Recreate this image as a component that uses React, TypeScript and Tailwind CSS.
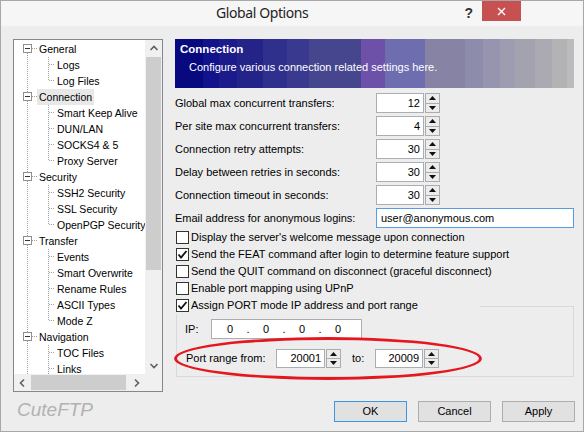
import React from "react";

type TreeNode = { label: string; kind: "parent" | "child" | "last"; first?: boolean; selected?: boolean };

const tree: TreeNode[] = [
  { label: "General", kind: "parent", first: true },
  { label: "Logs", kind: "child" },
  { label: "Log Files", kind: "last" },
  { label: "Connection", kind: "parent", selected: true },
  { label: "Smart Keep Alive", kind: "child" },
  { label: "DUN/LAN", kind: "child" },
  { label: "SOCKS4 & 5", kind: "child" },
  { label: "Proxy Server", kind: "last" },
  { label: "Security", kind: "parent" },
  { label: "SSH2 Security", kind: "child" },
  { label: "SSL Security", kind: "child" },
  { label: "OpenPGP Security", kind: "last" },
  { label: "Transfer", kind: "parent" },
  { label: "Events", kind: "child" },
  { label: "Smart Overwrite", kind: "child" },
  { label: "Rename Rules", kind: "child" },
  { label: "ASCII Types", kind: "child" },
  { label: "Mode Z", kind: "last" },
  { label: "Navigation", kind: "parent" },
  { label: "TOC Files", kind: "child" },
  { label: "Links", kind: "child" },
];

const spinRows: [string, string][] = [
  ["Global max concurrent transfers:", "12"],
  ["Per site max concurrent transfers:", "4"],
  ["Connection retry attempts:", "30"],
  ["Delay between retries in seconds:", "30"],
  ["Connection timeout in seconds:", "30"],
];

const checks: [string, boolean][] = [
  ["Display the server's welcome message upon connection", false],
  ["Send the FEAT command after login to determine feature support", true],
  ["Send the QUIT command on disconnect (graceful disconnect)", false],
  ["Enable port mapping using UPnP", false],
];

const DOT = "#a0a0a0";

function TreeLines({ node }: { node: TreeNode }) {
  if (node.kind === "parent") {
    return (
      <svg width="23" height="16" className="shrink-0">
        {!node.first && <line x1="13.5" y1="0" x2="13.5" y2="3" stroke={DOT} strokeDasharray="1 1" />}
        <line x1="13.5" y1="12" x2="13.5" y2="16" stroke={DOT} strokeDasharray="1 1" />
        <rect x="9.5" y="3.5" width="8" height="8" fill="#fff" stroke="#8f8f8f" />
        <line x1="11" y1="7.5" x2="16" y2="7.5" stroke="#333" />
        <line x1="18" y1="7.5" x2="23" y2="7.5" stroke={DOT} strokeDasharray="1 1" />
      </svg>
    );
  }
  return (
    <svg width="41" height="16" className="shrink-0">
      <line x1="13.5" y1="0" x2="13.5" y2="16" stroke={DOT} strokeDasharray="1 1" />
      <line x1="34.5" y1="0" x2="34.5" y2={node.kind === "last" ? 8 : 16} stroke={DOT} strokeDasharray="1 1" />
      <line x1="35" y1="7.5" x2="42" y2="7.5" stroke={DOT} strokeDasharray="1 1" />
    </svg>
  );
}

function Chevron({ dir }: { dir: "up" | "down" | "left" | "right" }) {
  const pts = {
    up: "1.5,6 5,2.5 8.5,6",
    down: "1.5,3 5,6.5 8.5,3",
    left: "6,1.5 2.5,5 6,8.5",
    right: "3,1.5 6.5,5 3,8.5",
  }[dir];
  return (
    <svg width="10" height="10">
      <polyline points={pts} fill="none" stroke="#606060" strokeWidth="1.6" />
    </svg>
  );
}

function Spin() {
  return (
    <div className="ml-[1px] w-[15px] h-full border border-[#acacac] bg-[#ececec] flex flex-col">
      <div className="flex-1 flex items-center justify-center border-b border-[#acacac]">
        <svg width="7" height="4">
          <polygon points="0,4 3.5,0 7,4" fill="#111" />
        </svg>
      </div>
      <div className="flex-1 flex items-center justify-center">
        <svg width="7" height="4">
          <polygon points="0,0 3.5,4 7,0" fill="#111" />
        </svg>
      </div>
    </div>
  );
}

function NumberBox({ value, width }: { value: string; width: string }) {
  return (
    <div className={`${width} h-full bg-white border border-[#abadb3] flex items-center justify-end pr-[3px]`}>
      {value}
    </div>
  );
}

function CheckBox({ checked }: { checked: boolean }) {
  return (
    <div className="w-[13px] h-[13px] border border-[#333] bg-white flex items-center justify-center shrink-0">
      {checked && (
        <svg width="11" height="11">
          <polyline points="1.5,5.5 4,8.5 9.5,2" fill="none" stroke="#111" strokeWidth="1.8" />
        </svg>
      )}
    </div>
  );
}

function Button({ label, primary }: { label: string; primary?: boolean }) {
  return (
    <div
      className={`w-[73px] h-[21px] bg-[#e1e1e1] border flex items-center justify-center ${
        primary ? "border-[#3c96e0]" : "border-[#adadad]"
      }`}
    >
      {label}
    </div>
  );
}

export default function App() {
  return (
    <div className="w-[584px] h-[432px] bg-[#ededed] border border-[#a8a8a8] flex flex-col text-[11px] leading-none text-black font-['Liberation_Sans',Arial,sans-serif] overflow-hidden">
      {/* title bar */}
      <div className="h-[25px] bg-[#f6f6f6] flex items-start shrink-0">
        <div className="pl-[215px] pt-[5px] text-[14px] tracking-[-0.4px] text-[#1e1e1e] font-['Noto_Sans',sans-serif] leading-none">
          Global Options
        </div>
        <div className="ml-auto pt-[5px] text-[14px] font-bold text-[#333] leading-none">?</div>
        <div className="ml-[9px] mr-[62px] w-[39px] h-[20px] bg-[#c75050] flex items-center justify-center">
          <svg width="9" height="9">
            <path d="M1 1 L8 8 M8 1 L1 8" stroke="#fff" strokeWidth="1.4" />
          </svg>
        </div>
      </div>

      {/* main area */}
      <div className="flex pt-[13px]">
        {/* options tree */}
        <div className="ml-[12px] w-[150px] h-[353px] border border-[#828790] bg-white flex flex-col shrink-0">
          <div className="flex h-[334px]">
            <div className="w-[131px] overflow-hidden pt-[1px] text-[10.5px]">
              {tree.map((n) => (
                <div key={n.label} className="h-[16px] flex items-center whitespace-nowrap">
                  <TreeLines node={n} />
                  <span className={`h-[16px] flex items-center px-[2px] ${n.selected ? "bg-[#e8e8e8]" : ""}`}>
                    {n.label}
                  </span>
                </div>
              ))}
            </div>
            <div className="w-[17px] bg-[#f0f0f0] flex flex-col">
              <div className="h-[17px] flex items-center justify-center">
                <Chevron dir="up" />
              </div>
              <div className="h-[213px] bg-[#cdcdcd] mx-[1px]" />
              <div className="flex-1" />
              <div className="h-[17px] flex items-center justify-center">
                <Chevron dir="down" />
              </div>
            </div>
          </div>
          <div className="flex h-[17px] bg-[#f0f0f0]">
            <div className="w-[17px] flex items-center justify-center">
              <Chevron dir="left" />
            </div>
            <div className="w-[95px] bg-[#cdcdcd] my-[1px]" />
            <div className="flex-1" />
            <div className="w-[17px] flex items-center justify-center">
              <Chevron dir="right" />
            </div>
            <div className="w-[17px]" />
          </div>
        </div>

        {/* connection page */}
        <div className="ml-[12px] w-[399px] flex flex-col">
          <div className="h-[49px] text-white bg-[linear-gradient(to_right,#08087f_0_28px,#12128a_28px_44px,#1b1b8c_44px_62px,#242488_62px_88px,#2f2f8d_88px_112px,#393990_112px_134px,#46468f_134px_186px,#6d50a8_186px_210px,#6d6db0_210px_250px,#8683a5_250px_290px,#8e8cab_290px_308px,#9694ae_308px_325px,#9d9cb1_325px_340px,#a3a2af_340px_360px,#abaab2_360px_377px,#b3b3b6_377px_392px,#bbbbbb_392px_399px)]">
            <div className="pl-[5px] pt-[5px] text-[11.5px] font-bold">Connection</div>
            <div className="pl-[14px] pt-[6px]">Configure various connection related settings here.</div>
          </div>

          <div className="mt-[5px] flex flex-col gap-[3px]">
            {spinRows.map(([label, value]) => (
              <div key={label} className="h-[20px] flex items-center">
                <div className="w-[201px]">{label}</div>
                <NumberBox value={value} width="w-[48px]" />
                <Spin />
              </div>
            ))}
            <div className="h-[20px] flex items-center">
              <div className="w-[201px]">Email address for anonymous logins:</div>
              <div className="w-[198px] h-full bg-white border border-[#569de5] flex items-center pl-[4px]">
                user@anonymous.com
              </div>
            </div>
          </div>

          <div className="mt-[1px] flex flex-col">
            {checks.map(([label, on]) => (
              <div key={label} className="h-[17px] flex items-center gap-[2px] pl-[1px]">
                <CheckBox checked={on} />
                <span>{label}</span>
              </div>
            ))}
          </div>

          {/* port mode group */}
          <div className="relative">
            <div className="mt-[9px] ml-[1px] w-[398px] h-[71px] border border-[#d9d9d9] flex flex-col pt-[12px] pl-[8px]">
              <div className="h-[20px] flex items-center">
                <div className="w-[26px]">IP:</div>
                <div className="w-[151px] h-full bg-white border border-[#abadb3] flex items-center pl-[9px]">
                  {["0", ".", "0", ".", "0", ".", "0"].map((c, i) => (
                    <span key={i} className="w-[18px] text-center">
                      {c}
                    </span>
                  ))}
                </div>
              </div>
              <div className="mt-[10px] h-[19px] flex items-center">
                <div className="w-[91px] pl-[1px]">Port range from:</div>
                <NumberBox value="20001" width="w-[49px]" />
                <Spin />
                <div className="ml-[11px] w-[23px]">to:</div>
                <NumberBox value="20009" width="w-[48px]" />
                <Spin />
              </div>
            </div>
            <div className="absolute left-0 top-0 w-[305px] h-[17px] bg-[#ededed] flex items-center gap-[2px] pl-[1px]">
              <CheckBox checked />
              <span>Assign PORT mode IP address and port range</span>
            </div>
            <div className="absolute left-[-1px] top-[40px] w-[308px] h-[43px] rounded-[50%] border-[3px] border-[#e5161e]" />
          </div>
        </div>
      </div>

      {/* footer */}
      <div className="flex items-start pt-[9px]">
        <div className="ml-[16px] mt-[-1px] text-[19px] italic text-[#b2b2b2]">CuteFTP</div>
        <div className="ml-auto mr-[8px] flex gap-[11px]">
          <Button label="OK" primary />
          <Button label="Cancel" />
          <Button label="Apply" />
        </div>
      </div>
    </div>
  );
}
